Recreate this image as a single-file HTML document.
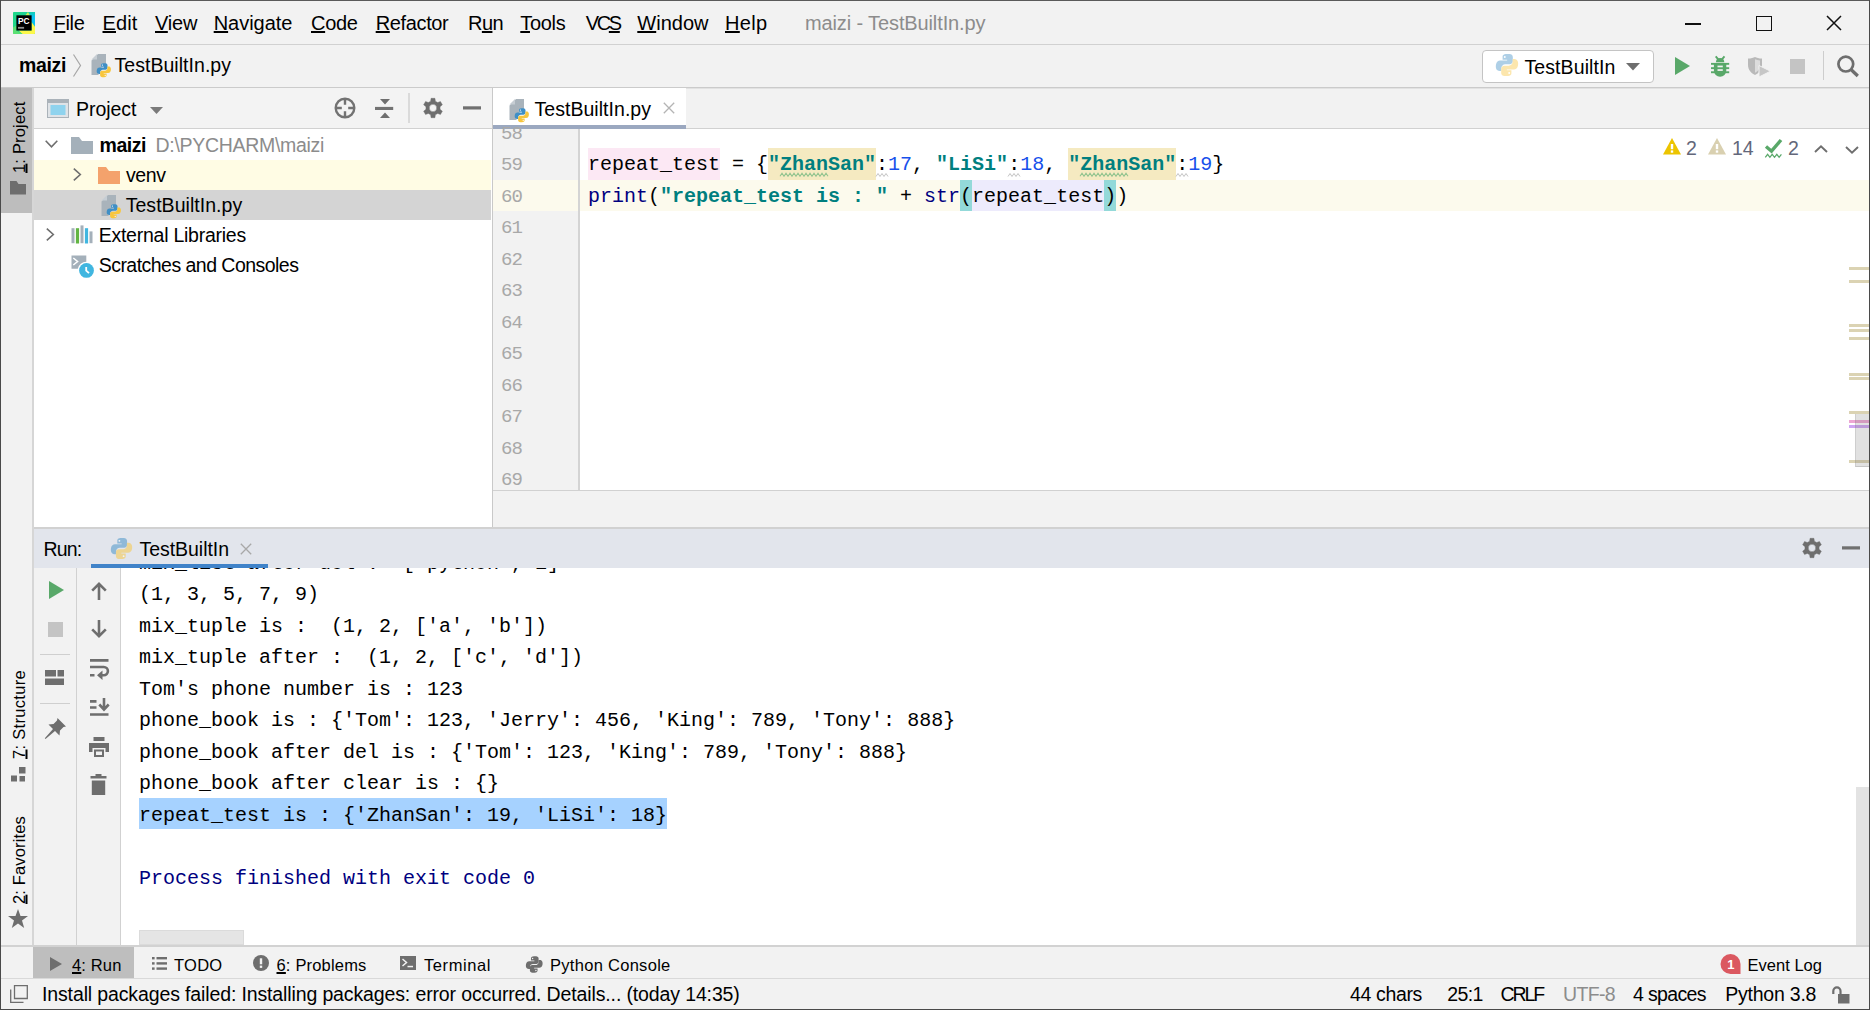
<!DOCTYPE html><html><head><meta charset="utf-8"><title>maizi - TestBuiltIn.py</title>
<style>
html,body{margin:0;padding:0;}
body{width:1870px;height:1010px;position:relative;overflow:hidden;background:#f2f2f2;font-family:"Liberation Sans",sans-serif;color:#000;}
.a{position:absolute;}
.t{position:absolute;white-space:pre;line-height:1;font-size:19.500px;}
.m{font-family:"Liberation Mono",monospace;font-size:20px;}
.bd{font-weight:bold;}
u{text-decoration:underline;text-decoration-thickness:1.600px;text-underline-offset:1.300px;}
.ln{position:absolute;white-space:pre;line-height:1;font-family:"Liberation Mono",monospace;font-size:19px;letter-spacing:-1px;color:#a8a8a8;left:501px;}
.cl{position:absolute;white-space:pre;line-height:1;font-family:"Liberation Mono",monospace;font-size:20px;left:139px;color:#000;}
.s{color:#007f7f;font-weight:bold;}
.n{color:#1750eb;}
.k{color:#000080;}
svg{position:absolute;overflow:visible;}
</style></head>
<body>


<!-- ============ SHARED SVG DEFS ============ -->
<svg width="0" height="0" style="left:0;top:0">
<defs>
<linearGradient id="pcg" x1="0" y1="0" x2="1" y2="1"><stop offset="0" stop-color="#21d789"></stop><stop offset="0.55" stop-color="#3bd9b0"></stop><stop offset="1" stop-color="#fcf84a"></stop></linearGradient>
<!-- python logo in a 16x16 box -->
<g id="py">
<path d="M7.9 1C5.7 1 5.2 1.9 5.2 2.9V4.6H8.1V5.2H3.6C2.4 5.2 1.3 6 1 7.7c-.3 1.7 0 3 .9 3.7.4.3.9.4 1.5.4h1V10c0-1.4 1.1-2.5 2.5-2.5h2.9c1 0 1.9-.9 1.9-1.9V2.9C11.700 1.800 10.700 1 9.600 1Z" fill="#3f8fc6"></path>
<circle cx="6.6" cy="2.9" r=".62" fill="#fff"></circle>
<path d="M8.1 15c2.200 0 2.700-.9 2.700-1.900V11.400H7.900V10.800h4.500c1.200 0 2.300-.8 2.600-2.500.3-1.700 0-3-.9-3.700-.4-.3-.9-.4-1.500-.4h-1V6c0 1.400-1.100 2.500-2.500 2.500H6.200c-1 0-1.900.9-1.900 1.900v2.700C4.300 14.200 5.300 15 6.400 15Z" fill="#f8c63d"></path>
<circle cx="9.4" cy="13.1" r=".62" fill="#fff"></circle>
</g>
<!-- python file icon: gray page + python logo; box 20x23 -->
<g id="pyf">
<path d="M7 0H15V12H10.500V16.500H7.500V21H.5V6.500Z" fill="#a9b3bb"></path>
<path d="M6 0L.5 5.500H6Z" fill="#c6cdd3"></path>
<g transform="translate(4.800,8.200) scale(1.0)"><use href="#py"></use></g>
</g>
<!-- gear 20x20 centered at 10,10 -->
<g id="gear">
<path fill="#6e6e6e" fill-rule="evenodd" stroke="#6e6e6e" stroke-width=".4" stroke-linejoin="round" d="M7.63 3.20 L8.04 0.30 L11.96 0.30 L12.37 3.20 L14.70 4.55 L17.43 3.45 L19.38 6.84 L17.07 8.65 L17.07 11.35 L19.38 13.16 L17.43 16.55 L14.70 15.45 L12.37 16.80 L11.96 19.70 L8.04 19.70 L7.63 16.80 L5.30 15.45 L2.57 16.55 L0.62 13.16 L2.93 11.35 L2.93 8.65 L0.62 6.84 L2.57 3.45 L5.30 4.55Z M10 6.300a3.700 3.700 0 1 0 0 7.400 3.700 3.700 0 0 0 0-7.400Z"></path>
</g>
</defs>
</svg>

<!-- ============ MENU BAR ============ -->
<!-- PyCharm logo -->
<svg style="left:13px;top:12px" width="22" height="22" viewBox="0 0 22 22">
<defs><linearGradient id="pcg2" x1="0" y1="0" x2="1" y2="0"><stop offset="0" stop-color="#21d789"></stop><stop offset="1" stop-color="#16cfa0"></stop></linearGradient>
<linearGradient id="pcg3" x1="0" y1="0" x2="0" y2="1"><stop offset="0" stop-color="#17cdb0"></stop><stop offset=".35" stop-color="#09c1f5"></stop><stop offset="1" stop-color="#09c1f5"></stop></linearGradient></defs>
<rect width="22" height="22" rx=".8" fill="url(#pcg2)"></rect>
<path d="M16 0H22V15L18 9Z" fill="url(#pcg3)"></path>
<path d="M12.200 3.400L15 0 17 3.400Z" fill="#c9f055"></path>
<path d="M22 14.800V21.200a.8 .8 0 0 1-.8 .8H9.500L5.500 18.500H18.500V10Z" fill="#fcf84a"></path>
<path d="M0 15.500L3.300 13.500V18.500L9.500 22H.8A.8 .8 0 0 1 0 21.200Z" fill="#6fe36a" opacity=".75"></path>
<rect x="3.400" y="3.300" width="15.200" height="15.200" fill="#000"></rect>
<text x="4.900" y="12.300" font-family="Liberation Sans" font-weight="bold" font-size="9.700" fill="#fff" textLength="11.600" lengthAdjust="spacingAndGlyphs">PC</text>
<rect x="5" y="14.900" width="6.100" height="1.800" fill="#909090"></rect>
</svg>
<!-- window controls -->
<div class="a" style="left:1685px;top:23.300px;width:16px;height:1.500px;background:#111"></div>
<div class="a" style="left:1756px;top:15.500px;width:15.500px;height:15.500px;border:1.600px solid #111;box-sizing:border-box"></div>
<svg style="left:1826px;top:15px" width="16" height="16" viewBox="0 0 16 16"><path d="M1 1L15 15M15 1L1 15" stroke="#111" stroke-width="1.500" fill="none"></path></svg>

<div class="a" style="left:0;top:44px;width:1870px;height:1px;background:#d1d1d1"></div>
<span class="t" style="left: 53.5px; font-size: 20px; letter-spacing: -0.31px; top: 13px;"><u>F</u>ile</span>
<span class="t" style="left: 102.5px; font-size: 20px; letter-spacing: 0.13px; top: 13px;"><u>E</u>dit</span>
<span class="t" style="left: 155px; font-size: 20px; letter-spacing: -0.18px; top: 13px;"><u>V</u>iew</span>
<span class="t" style="left: 213.7px; font-size: 20px; letter-spacing: -0.03px; top: 13px;"><u>N</u>avigate</span>
<span class="t" style="left: 311px; font-size: 20px; letter-spacing: -0.33px; top: 13px;"><u>C</u>ode</span>
<span class="t" style="left: 375.7px; font-size: 20px; letter-spacing: -0.36px; top: 13px;"><u>R</u>efactor</span>
<span class="t" style="left: 468px; font-size: 20px; letter-spacing: -0.57px; top: 13px;">R<u>u</u>n</span>
<span class="t" style="left: 520.3px; font-size: 20px; letter-spacing: -0.34px; top: 13px;"><u>T</u>ools</span>
<span class="t" style="left: 585.8px; font-size: 20px; letter-spacing: -2.38px; top: 13px;">VC<u>S</u></span>
<span class="t" style="left: 637.3px; font-size: 20px; letter-spacing: 0.02px; top: 13px;"><u>W</u>indow</span>
<span class="t" style="left: 725px; font-size: 20px; letter-spacing: 0.34px; top: 13px;"><u>H</u>elp</span>
<span class="t" style="left: 805px; font-size: 20px; color: rgb(140, 140, 140); letter-spacing: -0.12px; top: 13px;">maizi - TestBuiltIn.py</span>

<!-- ============ NAV BAR ============ -->
<div class="a" style="left:0;top:87px;width:1870px;height:1px;background:#cbcbcb"></div><div class="a" style="left:0;top:88px;width:1870px;height:1px;background:#e2e2e2"></div>
<span class="t bd" style="left: 19px; letter-spacing: -0.36px; top: 55.7px;">maizi</span>
<span class="t" style="left: 114.5px; letter-spacing: 0.04px; top: 55.7px;">TestBuiltIn.py</span>
<div class="a" style="left:1482px;top:50px;width:170px;height:31px;background:#fff;border:1px solid #c4c4c4;border-radius:4px;box-sizing:content-box"></div>
<span class="t" style="left: 1524.5px; letter-spacing: 0.09px; top: 57.5px;">TestBuiltIn</span>


<!-- nav chevron -->
<svg style="left:72px;top:54px" width="10" height="24" viewBox="0 0 10 24"><path d="M1.500 .5L8.500 11.500 1.500 22.500" stroke="#a6a6a6" stroke-width="1.200" fill="none"></path></svg>
<svg style="left:91px;top:54px" width="20" height="23" viewBox="0 0 20 23"><use href="#pyf"></use></svg>
<!-- run config python icon (faded) -->
<svg style="left:1496px;top:54px;opacity:.42" width="22" height="22" viewBox="1 1 14 14"><use href="#py"></use></svg>
<svg style="left:1626px;top:63px" width="14" height="8" viewBox="0 0 14 8"><path d="M0 0H14L7 7.500Z" fill="#6e6e6e"></path></svg>
<!-- run -->
<svg style="left:1675px;top:57px" width="15" height="18" viewBox="0 0 15 18"><path d="M0 0L15 9 0 18Z" fill="#59a869"></path></svg>
<!-- debug bug -->
<svg style="left:1711px;top:56px" width="18.2" height="21" viewBox="0 0 18.2 21">
<path d="M4.700 .4L7.500 3.700M13.500 .4L10.700 3.700" stroke="#59a869" stroke-width="1.900" fill="none"></path>
<g fill="#59a869"><path d="M4.900 6.300a4.200 4.200 0 0 1 8.400 0Z"></path>
<path d="M2.900 7.200H15.300V14.600a6.200 6.200 0 0 1-12.400 0Z"></path>
<rect x="0" y="6.900" width="18.200" height="1.900"></rect><rect x="0" y="11.200" width="18.200" height="1.900"></rect><rect x="0" y="15.300" width="18.200" height="1.900"></rect></g>
<rect x="6.500" y="9.600" width="5.300" height="1.700" fill="#f2f2f2"></rect><rect x="6.500" y="13.200" width="5.300" height="1.700" fill="#f2f2f2"></rect>
</svg>
<!-- coverage (disabled) -->
<svg style="left:1748px;top:57px" width="23" height="20" viewBox="0 0 23 20">
<path d="M0 1.500C3 1.500 5.500.8 7 0c1.500.8 4 1.500 7 1.500V8c0 5-3.500 8.500-7 10C3.500 16.500 0 13 0 8Z" fill="#b9b9b9"></path>
<path d="M7 2.200c1.300.6 3 1 5 1.200V8c0 3.600-2.300 6.400-5 7.700Z" fill="#dcdcdc"></path>
<path d="M11 8.500L22.500 14.200 11 20Z" fill="#c6c6c6" stroke="#f2f2f2" stroke-width="1"></path>
</svg>
<!-- stop (disabled) -->
<div class="a" style="left:1790px;top:59px;width:15px;height:15px;background:#c4c4c4"></div>
<div class="a" style="left:1823px;top:51px;width:1px;height:29px;background:#cdcdcd"></div>
<!-- search -->
<svg style="left:1836px;top:54px" width="24" height="24" viewBox="0 0 24 24"><circle cx="9.800" cy="10.100" r="7.400" fill="none" stroke="#6e6e6e" stroke-width="2.700"></circle><path d="M15 15.500L21.800 22" stroke="#6e6e6e" stroke-width="3.300"></path></svg>

<!-- ============ LEFT STRIPE ============ -->
<div class="a" style="left:1px;top:88px;width:31px;height:125px;background:#bdbdbd"></div>
<div class="a" style="left:32px;top:88px;width:2px;height:858px;background:#d6d6d6"></div>


<!-- left stripe labels (rotated) -->
<div class="a" style="left:0;top:0;width:0;height:0">
<span class="t" style="font-size: 16.5px; left: 27px; top: 173px; transform-origin: 0px 0px; transform: rotate(-90deg) translate(0px, -100%); letter-spacing: 0.18px;"><u>1</u>: Project</span>
<span class="t" style="font-size: 16.5px; left: 27px; top: 759px; transform-origin: 0px 0px; transform: rotate(-90deg) translate(0px, -100%); letter-spacing: 0.31px;"><u>7</u>: Structure</span>
<span class="t" style="font-size: 16.5px; left: 27px; top: 904px; transform-origin: 0px 0px; transform: rotate(-90deg) translate(0px, -100%); letter-spacing: 0.15px;"><u>2</u>: Favorites</span>
</div>
<!-- project stripe folder icon -->
<svg style="left:10px;top:181px" width="16" height="14" viewBox="0 0 16 14"><path d="M0 0H6.500L8.500 3H16V13.500H0Z" fill="#6e6e6e"></path></svg>
<!-- structure icon -->
<svg style="left:11px;top:767px" width="15" height="15" viewBox="0 0 15 15"><g fill="#6e6e6e"><rect x="8" y="0" width="6.500" height="6.500"></rect><rect x="0" y="8.500" width="6" height="6"></rect><rect x="8.500" y="9" width="5.500" height="5.500"></rect></g></svg>
<!-- favorites star -->
<svg style="left:8px;top:909px" width="20" height="19" viewBox="0 0 20 19"><path d="M10 0l2.500 7H20l-6 4.500L16.200 19 10 14.500 3.800 19 6 11.500 0 7h7.500Z" fill="#6e6e6e"></path></svg>

<!-- ============ PROJECT PANEL ============ -->
<div class="a" style="left:34px;top:88px;width:458px;height:40px;background:#f3f3f3"></div>
<div class="a" style="left:34px;top:128px;width:458px;height:1px;background:#d1d1d1"></div>
<div class="a" style="left:34px;top:129px;width:458px;height:399px;background:#fff"></div>
<div class="a" style="left:34px;top:160px;width:457px;height:30px;background:#fffce4"></div>
<div class="a" style="left:34px;top:190px;width:457px;height:30px;background:#d4d4d4"></div>
<div class="a" style="left:492px;top:88px;width:1px;height:440px;background:#c9c9c9"></div>
<span class="t" style="left: 76px; letter-spacing: -0.03px; top: 99.5px;">Project</span>
<span class="t bd" style="left: 99.5px; letter-spacing: -0.46px; top: 135.5px;">maizi</span>
<span class="t" style="left: 155.5px; color: rgb(140, 140, 140); letter-spacing: -0.3px; top: 135.5px;">D:\PYCHARM\maizi</span>
<span class="t" style="left: 126px; letter-spacing: -0.43px; top: 166px;">venv</span>
<span class="t" style="left: 125.7px; letter-spacing: 0.04px; top: 196px;">TestBuiltIn.py</span>
<span class="t" style="left: 98.7px; letter-spacing: -0.25px; top: 226px;">External Libraries</span>
<span class="t" style="left: 98.7px; letter-spacing: -0.53px; top: 256px;">Scratches and Consoles</span>


<!-- project header icons -->
<svg style="left:47px;top:99px" width="22" height="19" viewBox="0 0 22 19"><rect x=".5" y=".5" width="21" height="18" fill="#dfe3e7" stroke="#aab2b9"></rect><rect x=".5" y=".5" width="21" height="3.500" fill="#aab2b9"></rect><rect x="3.500" y="6" width="15" height="10" fill="#8fd3ee"></rect></svg>
<svg style="left:150px;top:107px" width="13" height="7" viewBox="0 0 13 7"><path d="M0 0H13L6.500 7Z" fill="#7a7a7a"></path></svg>
<!-- locate -->
<svg style="left:334px;top:97px" width="22" height="22" viewBox="0 0 22 22"><circle cx="11" cy="11" r="9.300" fill="none" stroke="#727272" stroke-width="2.400"></circle><path d="M11 1.500V7.800M11 14.200V20.500M1.500 11H7.800M14.200 11H20.500" stroke="#727272" stroke-width="2.400"></path></svg>
<!-- collapse all -->
<svg style="left:375px;top:98.700px" width="20" height="19" viewBox="0 0 20 19"><rect x="0" y="7.900" width="18.200" height="3.100" fill="#727272"></rect><path d="M5 0H15L10 5.500ZM5 19H15L10 13.500Z" fill="#6e6e6e"></path></svg>
<div class="a" style="left:408px;top:93px;width:2px;height:30px;background:#dadada"></div>
<svg style="left:423px;top:98px" width="20" height="20" viewBox="0 0 20 20"><use href="#gear"></use></svg>
<svg style="left:463px;top:104px" width="18" height="8" viewBox="0 0 18 8"><rect x="0" y="2.300" width="18" height="3.200" fill="#707070"></rect></svg>
<!-- tree icons -->
<svg style="left:45px;top:140px" width="13" height="8" viewBox="0 0 13 8"><path d="M.7 .7L6.500 6.800 12.300 .7" stroke="#6e6e6e" stroke-width="1.600" fill="none"></path></svg>
<svg style="left:71px;top:137px" width="22" height="17" viewBox="0 0 22 17"><path d="M0 0H8L11 4H22V17H0Z" fill="#a4b0ba"></path></svg>
<svg style="left:73px;top:168px" width="9" height="13" viewBox="0 0 9 13"><path d="M.8 .7L7.300 6.500 .8 12.300" stroke="#6e6e6e" stroke-width="1.600" fill="none"></path></svg>
<svg style="left:98px;top:167px" width="22" height="17" viewBox="0 0 22 17"><path d="M0 0H8L11 4H22V17H0Z" fill="#f4a26c"></path></svg>
<svg style="left:101px;top:195.300px" width="20" height="23" viewBox="0 0 20 23"><use href="#pyf"></use></svg>
<svg style="left:46px;top:228px" width="9" height="13" viewBox="0 0 9 13"><path d="M.8 .7L7.300 6.500 .8 12.300" stroke="#6e6e6e" stroke-width="1.600" fill="none"></path></svg>
<!-- external libraries -->
<svg style="left:71px;top:225px" width="22" height="19" viewBox="0 0 22 19"><rect x=".5" y="3.200" width="3" height="15" fill="#a4b0ba"></rect><rect x="4.900" y="3.200" width="3.200" height="15.300" fill="#62b543"></rect><rect x="9.500" y=".4" width="3" height="17.800" fill="#a4b0ba"></rect><rect x="13.900" y="3.200" width="3.200" height="15.300" fill="#40b6e0"></rect><rect x="18.500" y="6.400" width="3" height="11.800" fill="#a4b0ba"></rect></svg>
<!-- scratches -->
<svg style="left:71px;top:255px" width="24" height="24" viewBox="0 0 24 24"><path d="M.5 .5H15.300V6.700A8.700 8.700 0 0 0 6.800 13.800H.5Z" fill="#a4b0ba"></path><path d="M2.300 3L6.600 6.500 2.300 10" stroke="#fff" stroke-width="1.500" fill="none"></path><circle cx="15.500" cy="15.400" r="7.400" fill="#40b6e0"></circle><path d="M15.200 12V15.600L18 18.200" stroke="#fff" stroke-width="1.800" fill="none"></path></svg>

<!-- ============ EDITOR ============ -->
<div class="a" style="left:493px;top:88px;width:193px;height:37px;background:#fff"></div>
<div class="a" style="left:493px;top:125px;width:193px;height:4px;background:#9ba8c0"></div>
<div class="a" style="left:686px;top:128px;width:1184px;height:1px;background:#d1d1d1"></div>
<span class="t" style="left: 534.5px; letter-spacing: 0.04px; top: 99.5px;">TestBuiltIn.py</span>
<!-- editor body -->
<div class="a" style="left:493px;top:129px;width:1376px;height:361px;background:#fff"></div>
<div class="a" style="left:493px;top:129px;width:85px;height:361px;background:#f2f2f2"></div>
<div class="a" style="left:493px;top:180px;width:1376px;height:31px;background:#fcfaed"></div>
<div class="a" style="left:578px;top:129px;width:2px;height:361px;background:#d4d4d4"></div>
<div class="a" style="left:493px;top:490px;width:1377px;height:1px;background:#d1d1d1"></div>
<div class="a" style="left:34px;top:527px;width:1836px;height:2px;background:#d1d1d1"></div>
<!-- highlights -->
<div class="a" style="left:588px;top:148px;width:132px;height:32px;background:#fce8f4"></div>
<div class="a" style="left:768px;top:148px;width:108px;height:32px;background:#f5eac1"></div>
<div class="a" style="left:1068px;top:148px;width:108px;height:32px;background:#f5eac1"></div>
<div class="a" style="left:960px;top:180px;width:12px;height:31px;background:#93d9d9"></div>
<div class="a" style="left:972px;top:180px;width:132px;height:31px;background:#edebfc"></div>
<div class="a" style="left:1104px;top:180px;width:12px;height:31px;background:#93d9d9"></div>
<!-- line numbers -->
<span class="ln" style="top: 124.5px;">58</span>
<span class="ln" style="top: 156px;">59</span>
<span class="ln" style="top: 187.5px;">60</span>
<span class="ln" style="top: 219px;">61</span>
<span class="ln" style="top: 250.5px;">62</span>
<span class="ln" style="top: 282px;">63</span>
<span class="ln" style="top: 313.5px;">64</span>
<span class="ln" style="top: 345px;">65</span>
<span class="ln" style="top: 376.5px;">66</span>
<span class="ln" style="top: 408px;">67</span>
<span class="ln" style="top: 439.5px;">68</span>
<span class="ln" style="top: 471px;">69</span>
<!-- code -->
<span class="cl" style="left: 588px; top: 155px;">repeat_test = {<span class="s">"ZhanSan"</span>:<span class="n">17</span>, <span class="s">"LiSi"</span>:<span class="n">18</span>, <span class="s">"ZhanSan"</span>:<span class="n">19</span>}</span>
<span class="cl" style="left: 588px; top: 186.5px;"><span class="k">print</span>(<span class="s">"repeat_test is : "</span> + <span class="k">str</span>(repeat_test))</span>


<!-- editor tab icon + close -->
<svg style="left:509px;top:99px" width="20" height="23" viewBox="0 0 20 23"><use href="#pyf"></use></svg>
<svg style="left:663px;top:102px" width="12" height="12" viewBox="0 0 12 12"><path d="M.8 .8L11.200 11.200M11.200 .8L.8 11.200" stroke="#b4b4b4" stroke-width="1.300" fill="none"></path></svg>
<!-- inspection widget -->
<svg style="left:1663px;top:138px" width="18" height="17" viewBox="0 0 18 17"><path d="M9 0L18 16.500H0Z" fill="#ecc400"></path><rect x="7.800" y="6" width="2.400" height="5.200" fill="#fff"></rect><rect x="7.800" y="12.400" width="2.400" height="2.300" fill="#fff"></rect></svg>
<svg style="left:1708px;top:138px" width="18" height="17" viewBox="0 0 18 17"><path d="M9 0L18 16.500H0Z" fill="#d9d0b0"></path><rect x="7.800" y="6" width="2.400" height="5.200" fill="#fff"></rect><rect x="7.800" y="12.400" width="2.400" height="2.300" fill="#fff"></rect></svg>
<svg style="left:1765px;top:139px" width="18" height="19" viewBox="0 0 18 19"><path d="M1 7.500L6.500 12.200 16 1" stroke="#59a869" stroke-width="3.400" fill="none"></path><path d="M.3 18.300L2.600 15.300 4.900 18.300 7.200 15.300 9.500 18.300 11.800 15.300 14.100 18.300 16.400 15.300" stroke="#59a869" stroke-width="1.250" fill="none"></path></svg>
<svg style="left:1814px;top:145px" width="14" height="8" viewBox="0 0 14 8"><path d="M1 7L7 1.200 13 7" stroke="#6e6e6e" stroke-width="1.900" fill="none"></path></svg>
<svg style="left:1845px;top:146px" width="14" height="8" viewBox="0 0 14 8"><path d="M1 1L7 6.800 13 1" stroke="#6e6e6e" stroke-width="1.900" fill="none"></path></svg>
<span class="t" style="left: 1686px; font-size: 19.5px; color: rgb(99, 103, 122); top: 139px;">2</span>
<span class="t" style="left: 1732px; font-size: 19.5px; color: rgb(99, 103, 122); letter-spacing: -0.1px; top: 139px;">14</span>
<span class="t" style="left: 1788px; font-size: 19.5px; color: rgb(99, 103, 122); top: 139px;">2</span>
<!-- error stripe marks -->
<div class="a" style="left:1849px;top:267px;width:20px;height:3px;background:#dbd3b3"></div>
<div class="a" style="left:1849px;top:280px;width:20px;height:3px;background:#dbd3b3"></div>
<div class="a" style="left:1849px;top:324px;width:20px;height:3px;background:#dbd3b3"></div>
<div class="a" style="left:1849px;top:328.500px;width:20px;height:3px;background:#dbd3b3"></div>
<div class="a" style="left:1849px;top:337px;width:20px;height:3px;background:#dbd3b3"></div>
<div class="a" style="left:1849px;top:373px;width:20px;height:3px;background:#dbd3b3"></div>
<div class="a" style="left:1849px;top:377px;width:20px;height:3px;background:#dbd3b3"></div>
<div class="a" style="left:1849px;top:411px;width:20px;height:3px;background:#dbd3b3"></div>
<div class="a" style="left:1849px;top:420px;width:20px;height:3px;background:#eda6d3"></div>
<div class="a" style="left:1849px;top:424.500px;width:20px;height:3px;background:#cfa5f3"></div>
<div class="a" style="left:1849px;top:460px;width:20px;height:3px;background:#dbd3b3"></div>
<div class="a" style="left:1855px;top:414px;width:14px;height:53px;background:rgba(120,120,120,.22);border-left:1px solid rgba(120,120,120,.18);border-bottom:1px solid rgba(120,120,120,.25);box-sizing:border-box"></div>
<!-- squiggles -->
<svg style="left:780px;top:172px" width="48" height="5" viewBox="0 0 48 5"><path d="M0 4.200l2-3 2 3l2-3 2 3l2-3 2 3l2-3 2 3l2-3 2 3l2-3 2 3l2-3 2 3l2-3 2 3l2-3 2 3l2-3 2 3l2-3 2 3l2-3 2 3" stroke="#93c48f" stroke-width="1.100" fill="none"></path></svg>
<svg style="left:1080px;top:172px" width="48" height="5" viewBox="0 0 48 5"><path d="M0 4.200l2-3 2 3l2-3 2 3l2-3 2 3l2-3 2 3l2-3 2 3l2-3 2 3l2-3 2 3l2-3 2 3l2-3 2 3l2-3 2 3l2-3 2 3l2-3 2 3" stroke="#93c48f" stroke-width="1.100" fill="none"></path></svg>
<svg style="left:876px;top:173px" width="12" height="4" viewBox="0 0 12 4"><path d="M0 3.500l2-3 2 3 2-3 2 3 2-3 2 3" stroke="#c4c4c4" stroke-width="1" fill="none"></path></svg>
<svg style="left:1008px;top:173px" width="12" height="4" viewBox="0 0 12 4"><path d="M0 3.500l2-3 2 3 2-3 2 3 2-3 2 3" stroke="#c4c4c4" stroke-width="1" fill="none"></path></svg>
<svg style="left:1176px;top:173px" width="12" height="4" viewBox="0 0 12 4"><path d="M0 3.500l2-3 2 3 2-3 2 3 2-3 2 3" stroke="#c4c4c4" stroke-width="1" fill="none"></path></svg>

<!-- ============ RUN PANEL ============ -->
<div class="a" style="left:34px;top:529px;width:1835px;height:39px;background:#e2e5ec"></div>
<div class="a" style="left:91px;top:564px;width:177px;height:4px;background:#4083c9"></div>
<span class="t" style="left: 43.5px; letter-spacing: -0.8px; top: 539.5px;">Run:</span>
<span class="t" style="left: 139.5px; letter-spacing: -0.04px; top: 539.5px;">TestBuiltIn</span>
<div class="a" style="left:121px;top:568px;width:1748px;height:378px;background:#fff"></div>
<div class="a" style="left:76px;top:568px;width:1px;height:378px;background:#d1d1d1"></div>
<div class="a" style="left:120px;top:568px;width:1px;height:378px;background:#d1d1d1"></div>
<div class="a" style="left:139px;top:798px;width:528px;height:31px;background:#a6d2ff"></div>
<div class="a" style="left:121px;top:568px;width:1736px;height:10px;overflow:hidden"><span class="cl" style="left:18px;top:-14.500px">mix_list after del :  ['python', 1]</span></div>
<span class="cl" style="top: 585px;">(1, 3, 5, 7, 9)</span>
<span class="cl" style="top: 616.5px;">mix_tuple is :  (1, 2, ['a', 'b'])</span>
<span class="cl" style="top: 648px;">mix_tuple after :  (1, 2, ['c', 'd'])</span>
<span class="cl" style="top: 679.5px;">Tom's phone number is : 123</span>
<span class="cl" style="top: 711px;">phone_book is : {'Tom': 123, 'Jerry': 456, 'King': 789, 'Tony': 888}</span>
<span class="cl" style="top: 742.5px;">phone_book after del is : {'Tom': 123, 'King': 789, 'Tony': 888}</span>
<span class="cl" style="top: 774px;">phone_book after clear is : {}</span>
<span class="cl" style="top: 805.5px;">repeat_test is : {'ZhanSan': 19, 'LiSi': 18}</span>
<span class="cl" style="color: rgb(0, 0, 127); top: 868.5px;">Process finished with exit code 0</span>
<div class="a" style="left:139px;top:930px;width:105px;height:14.500px;background:#e5e5e5;border:1px solid #dbdbdb;box-sizing:border-box"></div>
<div class="a" style="left:1856px;top:787px;width:13px;height:158px;background:#e3e3e3"></div>


<!-- run header icons -->
<svg style="left:110.500px;top:537.500px;opacity:.5" width="21" height="21" viewBox="1 1 14 14"><use href="#py"></use></svg>
<svg style="left:240px;top:543px" width="12" height="12" viewBox="0 0 12 12"><path d="M.8 .8L11.200 11.200M11.200 .8L.8 11.200" stroke="#a8a8a8" stroke-width="1.300" fill="none"></path></svg>
<svg style="left:1802px;top:538px" width="20" height="20" viewBox="0 0 20 20"><use href="#gear"></use></svg>
<svg style="left:1842px;top:544px" width="18" height="8" viewBox="0 0 18 8"><rect x="0" y="2.300" width="18" height="3.200" fill="#707070"></rect></svg>
<!-- run left toolbar col 1 -->
<svg style="left:48.700px;top:581px" width="15" height="18" viewBox="0 0 15 18"><path d="M0 0L15 9 0 18Z" fill="#59a869"></path></svg>
<div class="a" style="left:47.500px;top:621.500px;width:15px;height:15px;background:#c4c4c4"></div>
<div class="a" style="left:40px;top:653.500px;width:30px;height:1px;background:#cfcfcf"></div>
<svg style="left:45px;top:670px" width="19" height="15" viewBox="0 0 19 15"><g fill="#6e6e6e"><rect x="0" y="0" width="11" height="6.500"></rect><rect x="12.500" y="0" width="6.500" height="6.500"></rect><rect x="0" y="8.500" width="19" height="6.500"></rect></g></svg>
<div class="a" style="left:40px;top:702.500px;width:30px;height:1px;background:#cfcfcf"></div>
<svg style="left:44px;top:718px" width="22" height="22" viewBox="0 0 22 22"><path d="M13.500 0L22 8.500 19.500 9 16 12.500 15.500 17.500 11 13 1.500 21 .8 20.300 9 11 4.500 6.500 9.500 6 13 2.500Z" fill="#6e6e6e"></path></svg>
<!-- run left toolbar col 2 -->
<svg style="left:91px;top:582px" width="16" height="18" viewBox="0 0 16 18"><path d="M8 18V2M1.200 8.700L8 1.800 14.800 8.700" stroke="#6e6e6e" stroke-width="2.600" fill="none"></path></svg>
<svg style="left:91px;top:620px" width="16" height="18" viewBox="0 0 16 18"><path d="M8 0V16M1.200 9.300L8 16.200 14.800 9.300" stroke="#6e6e6e" stroke-width="2.600" fill="none"></path></svg>
<svg style="left:90px;top:659px" width="19" height="20" viewBox="0 0 19 20"><path d="M0 1.400H18.500M0 8H13.800a4.100 4.100 0 0 1 0 8.200H10M0 16.200H4.500" stroke="#6e6e6e" stroke-width="2.600" fill="none"></path><path d="M12.500 11.500L7 16.200 12.500 21Z" fill="#6e6e6e"></path></svg>
<svg style="left:90px;top:698px" width="19" height="18" viewBox="0 0 19 18"><path d="M0 3.400H6.500M0 9.500H6.500M0 16.500H18.500" stroke="#6e6e6e" stroke-width="2.600" fill="none"></path><path d="M14 0V11M9.300 6.500L14 11.500 18.700 6.500" stroke="#6e6e6e" stroke-width="2.600" fill="none"></path></svg>
<svg style="left:89px;top:737px" width="20" height="20" viewBox="0 0 20 20"><g fill="#6e6e6e"><rect x="4.500" y="0" width="11" height="4"></rect><path d="M0 6H20V15H16.500V11H3.500V15H0Z"></path><path d="M5 12.500H15V20H5ZM7 14.500V18H13V14.500Z" fill-rule="evenodd"></path></g></svg>
<svg style="left:90px;top:774px" width="17" height="21" viewBox="0 0 17 21"><g fill="#6e6e6e"><path d="M5.500 0H11.500V2H16.500V4.500H.5V2H5.500Z"></path><path d="M1.800 6.500H15.200V21H1.800Z"></path></g></svg>

<!-- ============ BOTTOM TOOL BAR ============ -->
<div class="a" style="left:0;top:945px;width:1870px;height:2px;background:#d2d2d2"></div>
<div class="a" style="left:33px;top:947px;width:101px;height:31px;background:#bebebe"></div>
<div class="a" style="left:0;top:978px;width:1870px;height:1px;background:#d9d9d9"></div>
<span class="t" style="left: 72px; font-size: 16.5px; letter-spacing: 0.15px; top: 956.5px;"><u>4</u>: Run</span>
<span class="t" style="left: 174px; font-size: 16.5px; letter-spacing: 0.28px; top: 956.5px;">TODO</span>
<span class="t" style="left: 276.5px; font-size: 16.5px; letter-spacing: 0.18px; top: 956.5px;"><u>6</u>: Problems</span>
<span class="t" style="left: 424px; font-size: 16.5px; letter-spacing: 0.58px; top: 956.5px;">Terminal</span>
<span class="t" style="left: 550px; font-size: 16.5px; letter-spacing: 0.29px; top: 956.5px;">Python Console</span>
<span class="t" style="left: 1747.5px; font-size: 16.5px; letter-spacing: 0.02px; top: 956.5px;">Event Log</span>

<!-- ============ STATUS BAR ============ -->
<span class="t" style="left: 42px; letter-spacing: -0.13px; top: 985px;">Install packages failed: Installing packages: error occurred. Details... (today 14:35)</span>
<span class="t" style="left: 1350px; letter-spacing: -0.35px; top: 985px;">44 chars</span>
<span class="t" style="left: 1447.2px; letter-spacing: -0.61px; top: 985px;">25:1</span>
<span class="t" style="left: 1500.5px; letter-spacing: -2.11px; top: 985px;">CRLF</span>
<span class="t" style="left: 1563px; color: rgb(140, 140, 140); letter-spacing: -0.65px; top: 985px;">UTF-8</span>
<span class="t" style="left: 1633px; letter-spacing: -0.66px; top: 985px;">4 spaces</span>
<span class="t" style="left: 1725.2px; letter-spacing: -0.22px; top: 985px;">Python 3.8</span>


<!-- bottom bar icons -->
<svg style="left:50px;top:957px" width="12" height="14" viewBox="0 0 12 14"><path d="M0 0L12 7 0 14Z" fill="#6e6e6e"></path></svg>
<svg style="left:152px;top:957px" width="15" height="13" viewBox="0 0 15 13"><g fill="#6e6e6e"><rect x="0" y="0" width="2.600" height="2.400"></rect><rect x="4.500" y="0" width="10.500" height="2.400"></rect><rect x="0" y="5.200" width="2.600" height="2.400"></rect><rect x="4.500" y="5.200" width="10.500" height="2.400"></rect><rect x="0" y="10.400" width="2.600" height="2.400"></rect><rect x="4.500" y="10.400" width="10.500" height="2.400"></rect></g></svg>
<svg style="left:253px;top:955px" width="16" height="16" viewBox="0 0 16 16"><circle cx="8" cy="8" r="8" fill="#6e6e6e"></circle><rect x="6.800" y="3.300" width="2.400" height="6" fill="#f2f2f2"></rect><rect x="6.800" y="10.600" width="2.400" height="2.300" fill="#f2f2f2"></rect></svg>
<svg style="left:400px;top:956px" width="16" height="14" viewBox="0 0 16 14"><rect width="16" height="14" fill="#6e6e6e"></rect><path d="M2.500 3L6.500 6.500 2.500 10" stroke="#f2f2f2" stroke-width="1.500" fill="none"></path><rect x="7.500" y="9.800" width="5.500" height="1.500" fill="#f2f2f2"></rect></svg>
<svg style="left:525.500px;top:955.500px" width="16.500" height="17" viewBox="1 1 14 14"><path d="M7.900 1C5.700 1 5.200 1.900 5.200 2.900V4.600H8.100V5.200H3.600C2.400 5.200 1.300 6 1 7.700c-.3 1.700 0 3 .9 3.700.4.300.9.400 1.500.400h1V10c0-1.400 1.100-2.500 2.500-2.500h2.900c1 0 1.900-.9 1.900-1.900V2.900C11.700 1.800 10.700 1 9.600 1Z" fill="#6e6e6e"></path><circle cx="6.600" cy="2.900" r=".62" fill="#f2f2f2"></circle><path d="M8.100 15c2.200 0 2.700-.9 2.700-1.900V11.400H7.900V10.800h4.500c1.200 0 2.300-.8 2.600-2.500.3-1.700 0-3-.9-3.700-.4-.3-.9-.4-1.500-.4h-1V6c0 1.400-1.100 2.500-2.500 2.500H6.200c-1 0-1.900.9-1.900 1.900v2.700C4.300 14.200 5.300 15 6.400 15Z" fill="#6e6e6e"></path><circle cx="9.400" cy="13.100" r=".62" fill="#f2f2f2"></circle></svg>
<!-- event log balloon -->
<svg style="left:1720px;top:954px" width="21" height="21" viewBox="0 0 21 21"><path d="M10.500 0a10 10 0 0 1 10 10V20H10.500A10 10 0 0 1 10.500 0Z" fill="#db5860"></path><text x="7.200" y="14.800" font-family="Liberation Sans" font-weight="bold" font-size="13" fill="#fff">1</text></svg>
<!-- status bar icons -->
<svg style="left:10px;top:985px" width="18" height="18" viewBox="0 0 18 18"><path d="M4.500 .7H17.300V13.500H4.500Z" fill="none" stroke="#6e6e6e" stroke-width="1.300"></path><path d="M.7 4.500V17.300H13.500" fill="none" stroke="#6e6e6e" stroke-width="1.300"></path></svg>
<svg style="left:1832px;top:985.700px" width="18" height="18" viewBox="0 0 18 18"><path d="M1.300 8V5a3.600 3.600 0 0 1 7.200 0V8" fill="none" stroke="#6e6e6e" stroke-width="2.200"></path><rect x="6" y="8" width="11.500" height="9.500" fill="#6e6e6e"></rect></svg>

<!-- ============ WINDOW FRAME ============ -->
<div class="a" style="left:0;top:0;width:1870px;height:1px;background:#5a5a5a"></div>
<div class="a" style="left:0;top:0;width:1px;height:1010px;background:#4a4a4a"></div>
<div class="a" style="left:1869px;top:0;width:1px;height:1010px;background:#4a4a4a"></div>
<div class="a" style="left:0;top:1009px;width:1870px;height:1px;background:#4a4a4a"></div>

</body></html>
